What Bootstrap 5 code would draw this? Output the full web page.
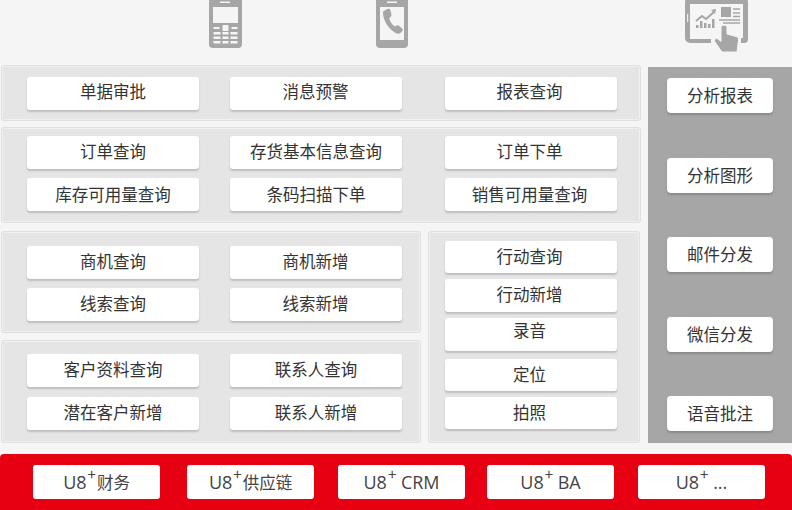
<!DOCTYPE html>
<html lang="zh"><head><meta charset="utf-8">
<link rel="stylesheet" href="https://cdn.jsdelivr.net/npm/bootstrap@5.3.0/dist/css/bootstrap.min.css">
<style>
html,body{background:#f5f5f5;margin:0;height:510px;overflow:hidden;font-family:"Noto Sans CJK SC","Liberation Sans",sans-serif;color:#333}
.toprow{height:65px}
.ico1{margin-left:209px}.ico2{margin-left:134px}.ico3{margin-left:276px}
.leftcol{width:640px;margin-left:1px}
.pane{background:#e5e5e5;border:1px solid #dfdfdf;box-shadow:inset 0 0 0 1px #f0f0f0;border-radius:3px}
.p-a{height:56px;padding:11px 0 0 25px}
.p-b{height:96px;margin-top:6px;padding:8px 0 0 25px}
.p-c{height:102px;width:420px;padding:14px 0 0 25px}
.p-d{height:103px;width:420px;margin-top:7px;padding:13px 0 0 25px}
.p-e{height:212px;width:212px;margin-left:7px;padding:9px 0 0 16px}
.lower{margin-top:8px}
.gapx{gap:31px}.third{margin-left:12px;padding-right:3px}
.vg9{gap:9px}.vg10{gap:10px}.vg6{gap:6px}.extra{margin-top:2px}
.tile{width:172px;height:33px;background:#fff;border-radius:3px;box-shadow:0 2px 2px #bdbdbd;font-size:16.5px;line-height:29px;text-align:center;white-space:nowrap}
.short{height:32px}
.mid{padding-right:1px}
.lh-31{line-height:31px}.lh-33{line-height:33px}.lh-25{line-height:25px}
.nudge{padding-right:3px}
.sidebar{width:144px;height:376px;margin:2px 0 0 7px;background:#a6a6a6;padding:11px 19px 12px}
.sidebtn{width:106px;height:35px;background:#fff;border-radius:4px;box-shadow:0 2px 2px #8a8a8a;font-size:16.5px;line-height:34px;text-align:center}
.redbar{height:56px;margin-top:11px;background:#e60012;border-radius:4px 4px 0 0;padding:11px 0 0 33px}
.redbtn{width:127px;height:34px;background:#fff;border-radius:3px;font-size:16.5px;line-height:34px;text-align:center;white-space:nowrap;color:#444}
.redbtn sup{font-size:15px;top:-.6em;margin:0 1px 0 1px}
.lat{font-family:"Open Sans",sans-serif;font-size:18px}
.g-a{margin-left:27px}.g-b{margin-left:24px}.g-c{margin-left:22px}
svg{display:block}
</style></head><body>
<div class="toprow d-flex">
<svg class="ico1" width="33" height="48" viewBox="0 0 33 48"><rect width="33" height="51" y="-3" rx="4" fill="#a6a6a6"/><g fill="#f5f5f5"><rect x="11" y="1.500" width="10" height="1.500"/><rect x="4" y="7" width="25" height="16"/><rect x="13.500" y="25" width="6" height="6" rx="1"/><rect x="4.500" y="27" width="6" height="2"/><rect x="22.500" y="27" width="6" height="2"/><rect x="4.500" y="32" width="7" height="2.500"/><rect x="13.500" y="32" width="6" height="2.500"/><rect x="21.500" y="32" width="7" height="2.500"/><rect x="4.500" y="36.500" width="7" height="2.500"/><rect x="13.500" y="36.500" width="6" height="2.500"/><rect x="21.500" y="36.500" width="7" height="2.500"/><rect x="4.500" y="41" width="7" height="2.500"/><rect x="13.500" y="41" width="6" height="2.500"/><rect x="21.500" y="41" width="7" height="2.500"/></g></svg>
<svg class="ico2" width="33" height="48" viewBox="0 0 33 48"><rect width="32" height="51" y="-3" rx="4" fill="#a6a6a6"/><rect x="11" y="1.500" width="10" height="1.500" fill="#f5f5f5"/><rect x="4" y="7" width="24" height="33" fill="#f5f5f5"/><path d="M8.500 10.500l3-1.500c1.500-.5 2.500 0 3 1.500l.8 3.500c.3 1.500 0 2.500-1 3.200l-1 .8c.5 3 2.500 6.500 5.500 8.500l1.500-.8c1-.5 2-.5 3 .3l2.700 2.500c1 1 1 2.200 0 3l-1.700 1.500c-1.500 1-3 .8-5-.3-7-4-12-12.500-12.300-19.500 0-1.300.3-2.200 1.500-2.700z" fill="#a6a6a6"/></svg>
<svg class="ico3" width="64" height="53" viewBox="0 0 64 53"><path d="M5 -3h53a5 5 0 0 1 5 5v37a4 4 0 0 1-4 4h-3v-5h2V4H5v35h21v4H5a5 5 0 0 1-5-5V2a5 5 0 0 1 5-5z" fill="#a6a6a6"/><rect x="2" y="14" width="1.200" height="8" fill="#eee"/><rect x="36" y="7" width="10" height="10" fill="#a6a6a6"/><path d="M48 9h7M48 13h7M48 16.500h7M34 20h21M38 23h17" stroke="#a6a6a6" stroke-width="1.300"/><path d="M11 21l6-5 4 3 8-7" fill="none" stroke="#a6a6a6" stroke-width="2"/><path d="M26 10l5-1-1 5z" fill="#a6a6a6"/><path d="M11 25h2.500v3H11zM15 21h2.500v7H15zM19 23h2.500v5H19zM23 24h2.500v4H23zM27 19h2.500v9H27z" fill="#a6a6a6"/><path d="M36 27c0-2.500 6-2.500 6 0v7l9 2.500c2 .6 2.800 1.500 2.500 3.500l-1.500 12H37l-7-10c-1.500-2 1-4.500 3-3l3 2.500z" fill="#a6a6a6" stroke="#f5f5f5"/></svg>
</div>
<div class="d-flex">
<div class="leftcol">
<div class="pane p-a d-flex gapx"><div class="tile">单据审批</div><div class="tile mid">消息预警</div><div class="tile third">报表查询</div></div>
<div class="pane p-b d-flex flex-column vg9">
<div class="d-flex gapx"><div class="tile lh-31">订单查询</div><div class="tile lh-31">存货基本信息查询</div><div class="tile third lh-31">订单下单</div></div>
<div class="d-flex gapx"><div class="tile lh-33">库存可用量查询</div><div class="tile lh-33">条码扫描下单</div><div class="tile third lh-33">销售可用量查询</div></div>
</div>
<div class="lower d-flex">
<div>
<div class="pane p-c d-flex flex-column vg9">
<div class="d-flex gapx"><div class="tile lh-31">商机查询</div><div class="tile mid lh-31">商机新增</div></div>
<div class="d-flex gapx"><div class="tile lh-31">线索查询</div><div class="tile mid lh-31">线索新增</div></div>
</div>
<div class="pane p-d d-flex flex-column vg10">
<div class="d-flex gapx"><div class="tile lh-31">客户资料查询</div><div class="tile lh-31">联系人查询</div></div>
<div class="d-flex gapx"><div class="tile lh-31">潜在客户新增</div><div class="tile lh-31">联系人新增</div></div>
</div>
</div>
<div class="pane p-e d-flex flex-column vg6">
<div class="tile short nudge lh-31">行动查询</div><div class="tile nudge lh-31">行动新增</div><div class="tile nudge lh-25">录音</div><div class="tile short nudge extra lh-31">定位</div><div class="tile short nudge lh-31">拍照</div>
</div>
</div>
</div>
<div class="sidebar d-flex flex-column justify-content-between">
<div class="sidebtn">分析报表</div><div class="sidebtn">分析图形</div><div class="sidebtn">邮件分发</div><div class="sidebtn">微信分发</div><div class="sidebtn">语音批注</div>
</div>
</div>
<div class="redbar d-flex">
<div class="redbtn"><span class="lat">U8</span><sup>+</sup>财务</div>
<div class="redbtn g-a"><span class="lat">U8</span><sup>+</sup>供应链</div>
<div class="redbtn g-b"><span class="lat">U8</span><sup>+</sup> <span class="lat">CRM</span></div>
<div class="redbtn g-c"><span class="lat">U8</span><sup>+</sup> <span class="lat">BA</span></div>
<div class="redbtn g-b"><span class="lat">U8</span><sup>+</sup> <span class="lat">...</span></div>
</div>
<script src="https://cdn.jsdelivr.net/npm/bootstrap@5.3.0/dist/js/bootstrap.bundle.min.js"></script>
</body></html>
